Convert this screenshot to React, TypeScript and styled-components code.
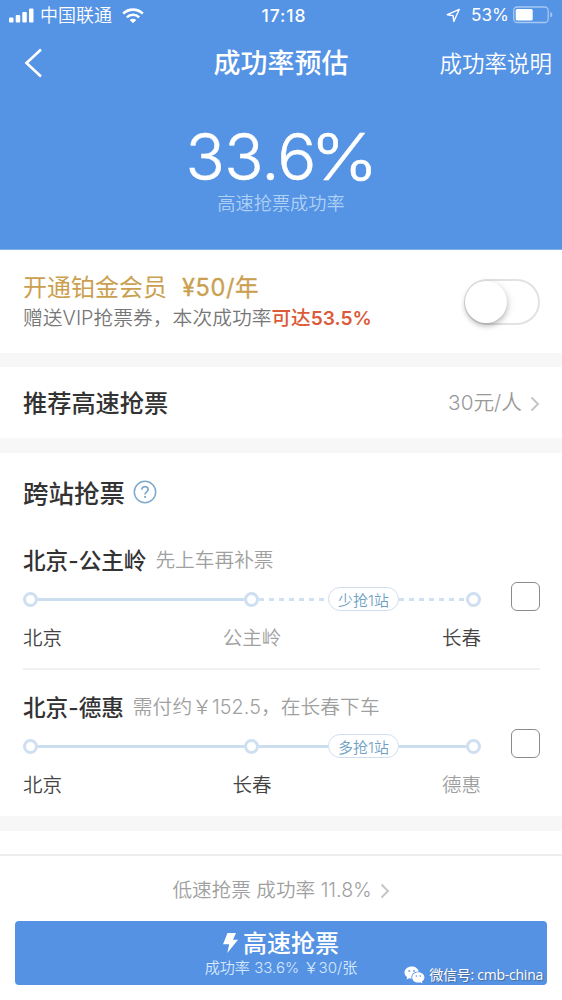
import React from 'react';
import styled, { createGlobalStyle } from 'styled-components';

const GlobalStyle = createGlobalStyle`
  * { box-sizing: border-box; }
  body {
    margin: 0;
    background: #fff;
    font-family: Inter, "Noto Sans CJK SC", sans-serif;
  }
`;

const Screen = styled.main`
  width: 562px;
  height: 1000px;
  display: flex;
  flex-direction: column;
  overflow: hidden;
  background: #fff;
`;

const Text = styled.span<{
  $size: number;
  $color?: string;
  $weight?: number;
  $spacing?: number;
  $leading?: number;
  $stroke?: number;
}>`
  display: block;
  white-space: pre;
  line-height: ${(p) => p.$leading ?? 1.2};
  font-size: ${(p) => p.$size}px;
  color: ${(p) => p.$color ?? '#fff'};
  font-weight: ${(p) => p.$weight ?? 400};
  letter-spacing: ${(p) => p.$spacing ?? 0}px;
  -webkit-text-stroke: ${(p) => p.$stroke ?? 0}px currentColor;
`;

const Header = styled.header`
  height: 250px;
  flex: none;
  display: flex;
  flex-direction: column;
  background: #5593e5;
  border-bottom: 1px solid #7eb0ea;
`;

const StatusBar = styled.div`
  height: 31px;
  display: grid;
  grid-template-columns: 1fr auto 1fr;
  align-items: center;
  padding: 0 8px 0 9px;
`;

const StatusGroup = styled.div<{ $end?: boolean }>`
  display: flex;
  align-items: center;
  justify-content: ${(p) => (p.$end ? 'flex-end' : 'flex-start')};
`;

const Clock = styled.div`
  padding-left: 5px;
`;

const SignalIcon = styled.svg`
  margin-right: 6px;
`;

const WifiIcon = styled.svg`
  margin-left: 10px;
`;

const LocationIcon = styled.svg`
  margin-right: 10px;
`;

const BatteryIcon = styled.svg`
  margin-left: 4px;
`;

const NavBar = styled.div`
  height: 64px;
  display: grid;
  grid-template-columns: 1fr auto 1fr;
  align-items: center;
  padding: 0 10px;
`;

const BackIcon = styled.svg`
  margin-left: 14px;
`;

const NavTitle = styled.div`
  padding-top: 3px;
`;

const NavAction = styled.div`
  justify-self: end;
`;

const Rate = styled.div`
  display: flex;
  flex-direction: column;
  align-items: center;
  padding-top: 34px;
`;

const RateValue = styled.div`
  display: flex;
`;

const Percent = styled.div`
  margin: 0 2px 0 -2px;
  transform: scaleX(1.12);
`;

const RateCaption = styled.div`
  margin-top: 9px;
`;

const Band = styled.div<{ $height: number }>`
  height: ${(p) => p.$height}px;
  flex: none;
  background: #f7f7f7;
`;

const Row = styled.section<{ $height: number; $top?: number }>`
  height: ${(p) => p.$height}px;
  flex: none;
  display: flex;
  align-items: center;
  justify-content: space-between;
  padding: ${(p) => p.$top ?? 0}px 22px 0 23px;
`;

const VipInfo = styled.div`
  display: flex;
  flex-direction: column;
  gap: 4px;
  padding-top: 1px;
`;

const Inline = styled.div`
  display: flex;
  align-items: center;
`;

const VipPrice = styled.div`
  margin-left: 15px;
`;

const Switch = styled.button`
  width: 76px;
  height: 46px;
  padding: 0;
  border: 2.5px solid #e2e2e2;
  border-radius: 23px;
  background: #fff;
  display: flex;
  align-items: center;
`;

const Knob = styled.span`
  width: 42px;
  height: 42px;
  margin-left: -1px;
  border-radius: 50%;
  background: #fff;
  box-shadow: 0 3px 5px rgba(0, 0, 0, 0.2), 2px 2px 8px rgba(0, 0, 0, 0.1);
`;

const RowChevron = styled.svg`
  margin-left: 8px;
`;

const SectionTitle = styled.div`
  height: 70px;
  display: flex;
  align-items: center;
  padding: 12px 0 0 23px;
`;

const HelpIcon = styled.svg`
  margin: 0 0 4px 8px;
`;

const Route = styled.article<{ $divided?: boolean }>`
  height: ${(p) => (p.$divided ? 147 : 146)}px;
  margin: 0 22px 0 23px;
  display: flex;
  border-bottom: ${(p) => (p.$divided ? '2px solid #f1f1f1' : '0')};
`;

const RouteBody = styled.div`
  width: 458px;
  flex: none;
`;

const RouteHead = styled.div`
  height: 27px;
  margin-top: 24px;
  display: flex;
  align-items: center;
`;

const RouteNote = styled.div`
  margin: 1px 0 0 9px;
`;

const Track = styled.div`
  height: 24px;
  margin-top: 13px;
  display: flex;
  align-items: center;
`;

const Stop = styled.span`
  width: 15px;
  height: 15px;
  flex: none;
  border: 3px solid #cfdff2;
  border-radius: 50%;
`;

const Line = styled.span<{ $width: number }>`
  width: ${(p) => p.$width}px;
  height: 3px;
  flex: none;
  background: #cbdef0;
`;

const Dashes = styled.span<{ $width: number }>`
  width: ${(p) => p.$width}px;
  height: 3px;
  flex: none;
  background: repeating-linear-gradient(90deg, #d0e1f3 0 5px, transparent 5px 10px);
`;

const Pill = styled.div`
  width: 71px;
  height: 24px;
  flex: none;
  display: flex;
  align-items: center;
  justify-content: center;
  padding-top: 4px;
  border: 1.5px solid #d0dff0;
  border-radius: 12px;
`;

const StopNames = styled.div`
  display: grid;
  grid-template-columns: 1fr auto 1fr;
  margin-top: 16px;
`;

const LastStop = styled.div`
  justify-self: end;
`;

const Checkbox = styled.button`
  width: 29px;
  height: 29px;
  margin: 59px 0 0 30px;
  padding: 0;
  border: 1.5px solid #8b8b8b;
  border-radius: 6px;
  background: #fff;
`;

const Footer = styled.footer`
  margin-top: 23px;
  border-top: 2px solid #ededed;
  padding: 0 15px;
`;

const SlowOption = styled.div`
  height: 65px;
  display: flex;
  align-items: center;
  justify-content: center;
  padding-top: 5px;
`;

const FastButton = styled.div`
  position: relative;
  height: 64px;
  padding-top: 9px;
  display: flex;
  flex-direction: column;
  align-items: center;
  border-radius: 4px;
  background: #5592e3;
`;

const BoltIcon = styled.svg`
  margin: 0 5px 3px 0;
`;

const Watermark = styled.div`
  position: absolute;
  right: 4px;
  bottom: 1px;
  display: flex;
  align-items: center;
  gap: 4px;
  text-shadow: 1px 1px 1px rgba(60, 70, 90, 0.55);
  font-family: "Open Sans", "Noto Sans CJK SC", sans-serif;
`;

const Chevron = () => (
  <RowChevron width="10" height="16" viewBox="0 0 10 16" fill="none" stroke="#c6c6c6" strokeWidth="2">
    <path d="M1.500 1.500 8 8l-6.500 6.500" />
  </RowChevron>
);

interface RouteInfo {
  title: string;
  note: string;
  noteSpacing: number;
  stops: [string, string, string];
  mutedStop: number;
  tag: string;
  dashed: boolean;
}

const routes: RouteInfo[] = [
  {
    title: '北京-公主岭',
    note: '先上车再补票',
    noteSpacing: 0,
    stops: ['北京', '公主岭', '长春'],
    mutedStop: 1,
    tag: '少抢1站',
    dashed: true,
  },
  {
    title: '北京-德惠',
    note: '需付约￥152.5，在长春下车',
    noteSpacing: 0.1,
    stops: ['北京', '长春', '德惠'],
    mutedStop: 2,
    tag: '多抢1站',
    dashed: false,
  },
];

const RouteItem = ({ route, divided }: { route: RouteInfo; divided: boolean }) => {
  const Segment = route.dashed ? Dashes : Line;
  const stopColor = (i: number) => (i === route.mutedStop ? '#a0a0a0' : '#444');
  return (
    <Route $divided={divided}>
      <RouteBody>
        <RouteHead>
          <Text $size={22.6} $color="#333" $weight={500}>{route.title}</Text>
          <RouteNote>
            <Text $size={19.7} $color="#a0a0a0" $weight={350} $spacing={route.noteSpacing}>{route.note}</Text>
          </RouteNote>
        </RouteHead>
        <Track>
          <Stop />
          <Line $width={206} />
          <Stop />
          <Segment $width={69} />
          <Pill>
            <Text $size={15} $color="#6f9fc4" $weight={350}>{route.tag}</Text>
          </Pill>
          <Segment $width={67} />
          <Stop />
        </Track>
        <StopNames>
          <Text $size={19.5} $color={stopColor(0)} $weight={350}>{route.stops[0]}</Text>
          <Text $size={19.5} $color={stopColor(1)} $weight={350}>{route.stops[1]}</Text>
          <LastStop>
            <Text $size={19.5} $color={stopColor(2)} $weight={350}>{route.stops[2]}</Text>
          </LastStop>
        </StopNames>
      </RouteBody>
      <Checkbox aria-label={route.title} />
    </Route>
  );
};

export default function App() {
  return (
    <Screen>
      <GlobalStyle />
      <Header>
        <StatusBar>
          <StatusGroup>
            <SignalIcon width="25" height="15" viewBox="0 0 25 15" fill="#fff">
              <rect x="0" y="9.500" width="4.500" height="5" rx="1" />
              <rect x="6.700" y="7" width="4.500" height="7.500" rx="1" />
              <rect x="13.300" y="4" width="4.500" height="10.500" rx="1" />
              <rect x="20" y="0.500" width="4.500" height="14" rx="1" />
            </SignalIcon>
            <Text $size={18} $weight={350}>中国联通</Text>
            <WifiIcon width="22" height="16" viewBox="0 0 22 16" fill="none" stroke="#fff" strokeWidth="2.600">
              <path d="M1.200 5.600a14 14 0 0 1 19.600 0M4.800 9.300a8.800 8.800 0 0 1 12.400 0" />
              <path d="M11 15.200 7.700 12a4.700 4.700 0 0 1 6.600 0z" fill="#fff" stroke="none" />
            </WifiIcon>
          </StatusGroup>
          <Clock>
            <Text $size={17.5} $weight={500} $spacing={0.9}>17:18</Text>
          </Clock>
          <StatusGroup $end>
            <LocationIcon width="15" height="15" viewBox="0 0 15 15" fill="none" stroke="#fff" strokeWidth="1.400" strokeLinejoin="round">
              <path d="M13.300 1.300 1.300 6.700l5.800.900.700 5.900z" />
            </LocationIcon>
            <Text $size={17.2} $weight={400}>53%</Text>
            <BatteryIcon width="41" height="18" viewBox="0 0 41 18" fill="none">
              <rect x="0.700" y="1" width="34.500" height="15.500" rx="3.500" stroke="#a6c9f2" strokeWidth="1.300" />
              <rect x="2.700" y="3" width="17" height="11.500" rx="1.500" fill="#fff" />
              <path d="M37.300 6v5.500c1.600-.5 2-1.500 2-2.700S38.900 6.500 37.300 6z" fill="#a6c9f2" />
            </BatteryIcon>
          </StatusGroup>
        </StatusBar>
        <NavBar>
          <BackIcon width="19" height="30" viewBox="0 0 19 30" fill="none" stroke="#fff" strokeWidth="2.600">
            <path d="M17 1.500 2.500 15 17 28.500" />
          </BackIcon>
          <NavTitle>
            <Text $size={27} $weight={500}>成功率预估</Text>
          </NavTitle>
          <NavAction>
            <Text $size={22.5} $weight={350}>成功率说明</Text>
          </NavAction>
        </NavBar>
        <Rate>
          <RateValue>
            <Text $size={65} $weight={300} $spacing={-0.8} $leading={0.85} $stroke={0.5}>33.6</Text>
            <Percent>
              <Text $size={65} $weight={300} $leading={0.85} $stroke={0.5}>%</Text>
            </Percent>
          </RateValue>
          <RateCaption>
            <Text $size={18.2} $weight={350} $color="#aed1f5">高速抢票成功率</Text>
          </RateCaption>
        </Rate>
      </Header>

      <Row $height={103}>
        <VipInfo>
          <Inline>
            <Text $size={24} $color="#cb9f50">开通铂金会员</Text>
            <VipPrice>
              <Text $size={23.6} $color="#cb9f50" $weight={400} $spacing={0.6} $stroke={0.3}>¥50/年</Text>
            </VipPrice>
          </Inline>
          <Inline>
            <Text $size={19.8} $color="#777" $weight={350}>赠送VIP抢票券，本次成功率</Text>
            <Text $size={19.6} $color="#dc5a38" $weight={500}>可达</Text>
            <Text $size={19.2} $color="#dc5a38" $weight={600}>53.5%</Text>
          </Inline>
        </VipInfo>
        <Switch aria-label="开通铂金会员">
          <Knob />
        </Switch>
      </Row>
      <Band $height={14} />
      <Row $height={71} $top={2}>
        <Text $size={24.2} $color="#333" $weight={500}>推荐高速抢票</Text>
        <Inline>
          <Text $size={20.7} $color="#999" $weight={350}>30元/人</Text>
          <Chevron />
        </Inline>
      </Row>
      <Band $height={15} />

      <section>
        <SectionTitle>
          <Text $size={25.5} $color="#333" $weight={500}>跨站抢票</Text>
          <HelpIcon width="24" height="24" viewBox="0 0 24 24" fill="none" stroke="#7fa9cb" strokeWidth="1.500">
            <circle cx="12" cy="12" r="10.700" />
            <path d="M8.900 9.700c0-1.900 1.300-3 3.100-3s3.100 1.100 3.100 2.800c0 2.400-3 2.400-3 5" strokeWidth="1.700" />
            <circle cx="12.100" cy="16.900" r="1.100" fill="#7fa9cb" stroke="none" />
          </HelpIcon>
        </SectionTitle>
        {routes.map((route, i) => (
          <RouteItem key={route.title} route={route} divided={i === 0} />
        ))}
      </section>
      <Band $height={15} />

      <Footer>
        <SlowOption>
          <Text $size={19.6} $color="#a0a0a0" $weight={350}>低速抢票 成功率 11.8%</Text>
          <Chevron />
        </SlowOption>
        <FastButton>
          <Inline>
            <BoltIcon width="15" height="20" viewBox="0 0 15 20" fill="#fff">
              <path d="M4.500 0h8.500l-3 6.800h5L4.300 20l1.900-8.800H0z" />
            </BoltIcon>
            <Text $size={24} $weight={500}>高速抢票</Text>
          </Inline>
          <Text $size={15.1} $weight={350} $color="#d5e8fb" $leading={1.2}>成功率 33.6% ￥30/张</Text>
          <Watermark>
            <svg width="21" height="18" viewBox="0 0 21 18" fill="#fff">
              <path d="M7.800.5C3.700.5.500 3.200.500 6.600c0 2 1.100 3.600 2.700 4.700L2.500 13.600l2.700-1.300c.8.200 1.500.4 2.300.4-.9-4 2.500-7.300 7.300-7.200C14.200 2.600 11.300.5 7.800.5z" />
              <path d="M14.300 6.300c-3.500 0-6.100 2.300-6.100 5.100s2.600 5.200 6.100 5.200c.7 0 1.400-.1 2-.3l2.100 1.200-.5-2c1.500-1 2.500-2.400 2.500-4.100 0-2.800-2.700-5.100-6.100-5.100z" />
              <g fill="#5592e3">
                <circle cx="5.300" cy="4.900" r="0.900" />
                <circle cx="10" cy="4.900" r="0.900" />
                <circle cx="12.300" cy="10" r="0.800" />
                <circle cx="16.300" cy="10" r="0.800" />
              </g>
            </svg>
            <Text $size={14} $spacing={-0.25}>微信号: cmb-china</Text>
          </Watermark>
        </FastButton>
      </Footer>
    </Screen>
  );
}
